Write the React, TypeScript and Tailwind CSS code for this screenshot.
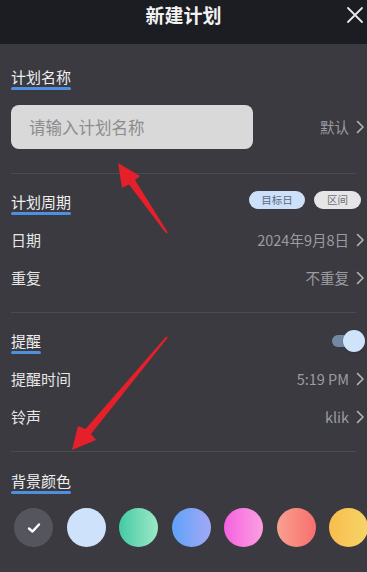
import React from "react";

const Chevron = () => (
  <svg width="9" height="14" viewBox="0 0 9 14" className="ml-[7px]">
    <path d="M1.5 1.5 L7 7 L1.5 12.5" fill="none" stroke="#b5b5b8" strokeWidth="1.6" strokeLinecap="round" strokeLinejoin="round" />
  </svg>
);

const Label = ({ text }: { text: string }) => (
  <div className="flex flex-col items-stretch w-fit">
    <div className="text-[15px] leading-[18px] text-[#efefef]">{text}</div>
    <div className="h-[3px] rounded-full bg-[#4f8fe0] mt-[1px]" />
  </div>
);

const Row = ({ left, right }: { left: string; right: string }) => (
  <div className="h-[38px] flex items-center justify-between">
    <span className="text-[15px] text-[#e6e6e6]">{left}</span>
    <span className="flex items-center text-[14.5px] text-[#9c9ca0] mr-[-9px]">
      {right}
      <Chevron />
    </span>
  </div>
);

export default function App() {
  const colors = [
    "bg-[#cfe2fb]",
    "bg-gradient-to-r from-[#3fcaa6] to-[#9ae9c6]",
    "bg-gradient-to-r from-[#5aa2f8] to-[#a2a8f6]",
    "bg-gradient-to-r from-[#f65fe0] to-[#fa9fdf]",
    "bg-gradient-to-r from-[#f9a090] to-[#f76e6e]",
    "bg-gradient-to-r from-[#f8bd4c] to-[#f6d467]",
  ];
  return (
    <div
      className="relative w-[367px] h-[572px] overflow-hidden bg-[#3a3a40]"
      style={{ fontFamily: '"Noto Sans CJK SC", "Noto Sans", sans-serif' }}
    >
      <div className="h-[44px] bg-[#1c1c23] flex items-center justify-center relative">
        <span className="text-[19px] font-bold text-[#f2f2f2] mt-[-13px]">新建计划</span>
        <svg width="18" height="18" viewBox="0 0 18 18" className="absolute right-[3px] top-[6px]">
          <path d="M2 2 L16 16 M16 2 L2 16" stroke="#e8e8e8" strokeWidth="1.8" strokeLinecap="round" />
        </svg>
      </div>

      <div className="px-[11px]">
        <div className="pt-[24px]">
          <Label text="计划名称" />
          <div className="mt-[15px] flex items-center justify-between">
            <div className="w-[242px] h-[44px] rounded-[8px] bg-[#d9d9da] flex items-center pl-[18px] text-[16.5px] text-[#8c8c8c]">
              请输入计划名称
            </div>
            <span className="flex items-center text-[14.5px] text-[#9c9ca0] mr-[-9px]">
              默认
              <Chevron />
            </span>
          </div>
          <div className="h-px bg-[#4a4a50] mt-[24px]" />
        </div>

        <div className="pt-[19px]">
          <div className="flex items-start justify-between">
            <Label text="计划周期" />
            <div className="flex gap-[9px] mt-[-2px] mr-[-5px]">
              <span className="h-[18px] w-[56px] rounded-full bg-[#cde0fa] text-[10.5px] text-[#5a6a80] flex items-center justify-center">目标日</span>
              <span className="h-[18px] w-[47px] rounded-full bg-[#e6e6e8] text-[10.5px] text-[#707074] flex items-center justify-center">区间</span>
            </div>
          </div>
          <div className="mt-[6px]">
            <Row left="日期" right="2024年9月8日" />
            <Row left="重复" right="不重复" />
          </div>
          <div className="h-px bg-[#4a4a50] mt-[15px]" />
        </div>

        <div className="pt-[19px]">
          <div className="flex items-start justify-between">
            <Label text="提醒" />
            <div className="relative w-[33px] h-[22px] mt-[-2px] mr-[-9px]">
              <div className="absolute left-0 top-[5px] w-[26px] h-[12px] rounded-full bg-[#7289a6]" />
              <div className="absolute right-0 top-0 w-[22px] h-[22px] rounded-full bg-[#cfe3fb] shadow" />
            </div>
          </div>
          <div className="mt-[6px]">
            <Row left="提醒时间" right="5:19 PM" />
            <Row left="铃声" right="klik" />
          </div>
          <div className="h-px bg-[#4a4a50] mt-[15px]" />
        </div>

        <div className="pt-[20px]">
          <Label text="背景颜色" />
        </div>
      </div>

      <div className="flex gap-[13.5px] pl-[14px] mt-[14px]">
        <div className="shrink-0 w-[39px] h-[39px] rounded-full bg-[#55555d] flex items-center justify-center">
          <svg width="14" height="12" viewBox="0 0 14 12">
            <path d="M2 6.5 L5.5 9.5 L12 2.5" fill="none" stroke="#ffffff" strokeWidth="2.4" strokeLinecap="round" strokeLinejoin="round" />
          </svg>
        </div>
        {colors.map((c, i) => (
          <div key={i} className={`shrink-0 w-[39px] h-[39px] rounded-full ${c}`} />
        ))}
      </div>

      <svg className="absolute left-0 top-0 pointer-events-none" width="367" height="572" viewBox="0 0 367 572">
        <polygon
          fill="#e5202a"
          points="118,163 140,176 135,180 167.8,232.4 166.2,233.6 129,184.5 122,188"
        />
        <polygon
          fill="#e5202a"
          points="72,450 78,426 85.5,429 166.2,336.4 167.8,337.6 91,434 96,440"
        />
      </svg>
    </div>
  );
}
